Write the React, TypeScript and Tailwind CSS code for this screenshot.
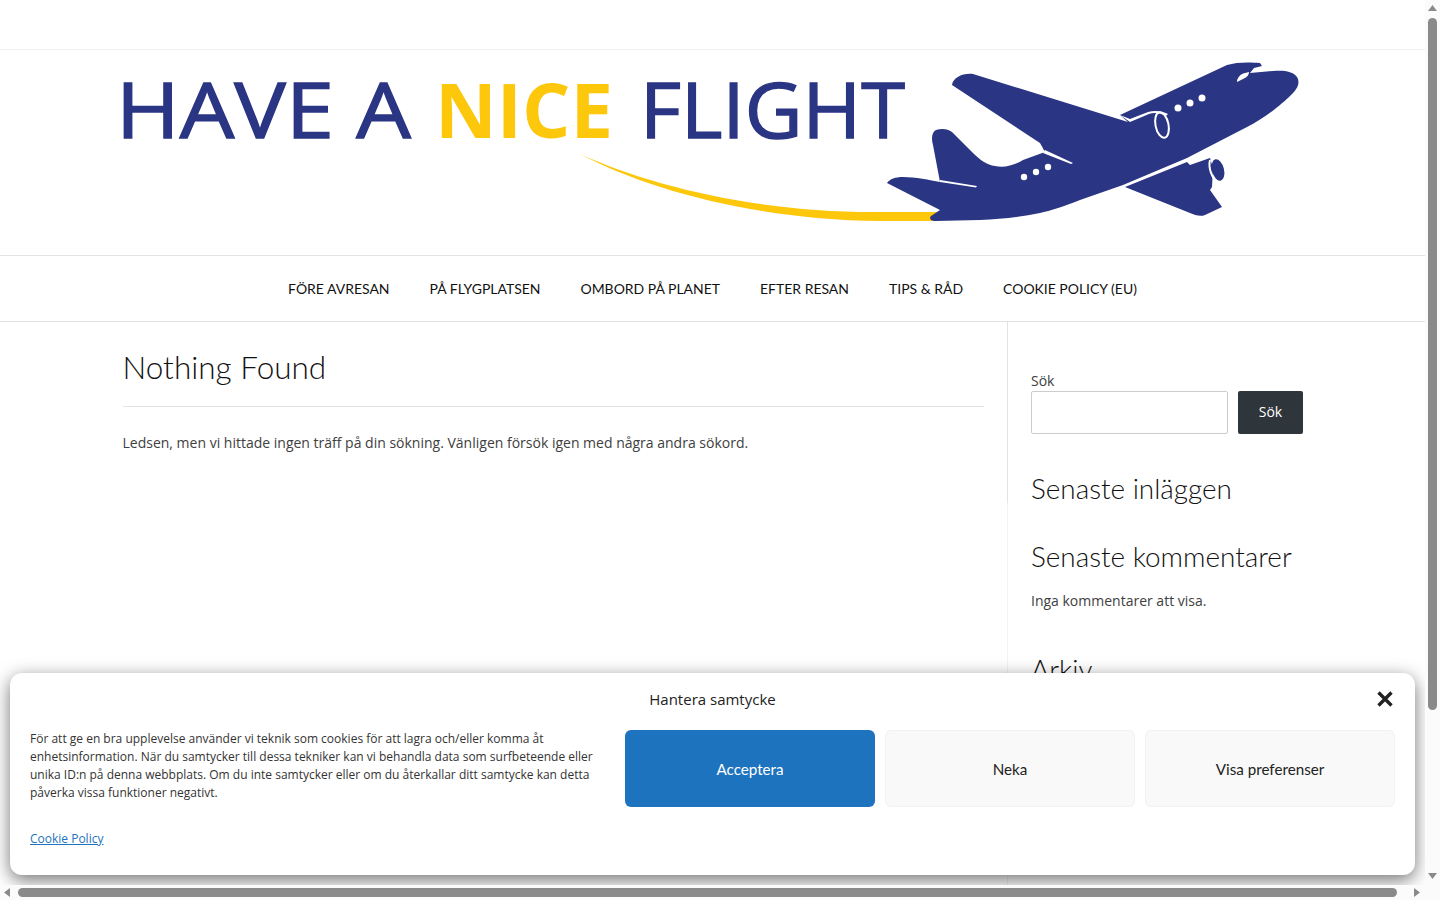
const navItems = ["FÖRE AVRESAN", "PÅ FLYGPLATSEN", "OMBORD PÅ PLANET", "EFTER RESAN", "TIPS & RÅD", "COOKIE POLICY (EU)"];

function Logo() {
  return (
    <svg width="1425" height="205" viewBox="0 50 1425 205" className="block">
      <text x="116" y="137.5" textLength="295" lengthAdjust="spacingAndGlyphs" fontFamily="'Open Sans', sans-serif" fontSize="76" fill="#2a3583" stroke="#2a3583" strokeWidth="1.4">HAVE A</text>
      <text x="435" y="137.5" textLength="178" lengthAdjust="spacingAndGlyphs" fontFamily="'Open Sans', sans-serif" fontWeight="700" fontSize="76" fill="#fdc70c">NICE</text>
      <text x="640" y="137.5" textLength="265" lengthAdjust="spacingAndGlyphs" fontFamily="'Open Sans', sans-serif" fontSize="76" fill="#2a3583" stroke="#2a3583" strokeWidth="1.4">FLIGHT</text>
      <path d="M580 154 C650 186 760 213 880 212 L940 212 L938 221 L880 221 C760 220 650 191 580 154 Z" fill="#fdc70c" />
      <g fill="#2a3583">
        <path d="M952 85 C953 78 962 73 973 74 L1128 122 L1120 115 L1227 65 C1236 62 1250 62 1260 63 L1262 66 L1254 68 L1250 73 L1273 71 C1283 70 1293 71 1297 77 C1301 84 1296 90 1291 95 C1282 104 1265 118 1247 127 L1187 158 L1123 185 L1080 200 C1065 206 1050 211 1040 213 C1020 217 1000 219 980 220 L935 221 C930 221 929 218 931 216 L940 210 L887 183 C890 179 895 177 903 177 C915 177 930 180 940 182 L933 145 C931 138 932 132 936 130 C942 128 948 129 952 132 L973 153 C980 160 987 165 995 166 C1005 168 1015 165 1023 160 L1045 152 L1040 143 Z" />
        <path d="M1125 187 L1187 162 L1190 165 L1210 158 L1213 168 L1212 187 L1210 190 L1222 207 L1205 215 C1200 217 1195 215 1190 213 Z" />
        <ellipse cx="1218" cy="170" rx="6" ry="11" transform="rotate(-14 1218 170)" />
      </g>
      <g fill="#fff">
        <path d="M1120 115 L1130 119 L1148 112 C1155 110 1162 111 1168 114 L1166 116 C1160 113 1154 112 1149 114 L1130 122 Z" />
        <path d="M1045 150 L1073 163 L1071 164 L1043 153 Z" />
        <path d="M940 180 L977 186 L976 187.5 L940 182 Z" />
        <circle cx="1178" cy="108" r="3.5" />
        <circle cx="1190" cy="103" r="3.5" />
        <circle cx="1202" cy="98" r="3.5" />
        <circle cx="1024" cy="177" r="3.2" />
        <circle cx="1036" cy="172" r="3.2" />
        <circle cx="1048" cy="167" r="3.2" />
        <path d="M1237 82 C1237 78 1240 74 1245 73 L1249 72 C1249 75 1247 77 1245 78 Z" />
      </g>
      <g fill="none" stroke="#fff" strokeWidth="2">
        <ellipse cx="1162" cy="125" rx="6.5" ry="13" transform="rotate(-12 1162 125)" />
        <path d="M1210 160 C1208 168 1212 178 1217 182" />
      </g>
    </svg>
  );
}

function Banner() {
  return (
    <div className="absolute left-[10px] top-[673px] h-[202px] w-[1405px] rounded-xl bg-white shadow-[0_5px_18px_rgba(0,0,0,0.55)]">
      <div className="flex h-[53px] items-center justify-center pb-[1px] text-[15px] text-[#222]">Hantera samtycke</div>
      <svg viewBox="0 0 16 16" className="absolute left-[1367px] top-[18px] h-4 w-4" fill="none" stroke="#222" strokeWidth="3.4">
        <path d="M1.5 1.5 L14.5 14.5 M14.5 1.5 L1.5 14.5" />
      </svg>
      <div className="flex gap-[10px] pl-5 pr-5 pt-[4px]">
        <div className="w-[585px] shrink-0">
          <p className="text-[12px] leading-[18px] text-[#333]">
            För att ge en bra upplevelse använder vi teknik som cookies för att lagra och/eller komma åt enhetsinformation. När du samtycker till dessa tekniker kan vi behandla data som surfbeteende eller unika ID:n på denna webbplats. Om du inte samtycker eller om du återkallar ditt samtycke kan detta påverka vissa funktioner negativt.
          </p>
          <a className="mt-[28px] block text-[12px] leading-[18px] text-[#1e73be] underline">Cookie Policy</a>
        </div>
        <button className="h-[77px] w-[250px] shrink-0 rounded-md bg-[#1e73be] pt-[1px] font-['Lato'] text-[15.2px] text-white">Acceptera</button>
        <button className="h-[77px] w-[250px] shrink-0 rounded-md border border-[#f2f2f2] bg-[#f9f9f9] pt-px font-['Lato'] text-[15.2px] text-[#222]">Neka</button>
        <button className="h-[77px] w-[250px] shrink-0 rounded-md border border-[#f2f2f2] bg-[#f9f9f9] pt-px font-['Lato'] text-[15.2px] text-[#222]">Visa preferenser</button>
      </div>
    </div>
  );
}

function ScrollArrow({ points, className }: { points: string; className: string }) {
  return (
    <svg viewBox="0 0 15 15" className={className} fill="#8a8a8a">
      <polygon points={points} />
    </svg>
  );
}

export default function App() {
  return (
    <div className="flex h-[900px] w-[1440px] flex-col overflow-hidden bg-white font-['Open_Sans'] text-[14px] text-[#404040]">
      <div className="flex h-[885px] shrink-0">
        <div className="relative h-[885px] w-[1425px] shrink-0 overflow-hidden">
          <div className="h-[50px] border-b border-[#efefef]" />
          <div className="h-[205px]">
            <Logo />
          </div>
          <nav className="flex h-[67px] items-center justify-center gap-[40px] border-y border-[#e3e3e3] pt-[2px] font-['Lato'] text-[13.97px] text-[#111]">
            {navItems.map((t) => (
              <span key={t}>{t}</span>
            ))}
          </nav>
          <div className="flex h-[563px]">
            <main className="relative w-[1008px] shrink-0 border-r border-[#f3f3f3] pl-[122.5px] pr-[23px] pt-[25px]">
              <div className="absolute right-[-1px] top-0 h-[181px] w-px bg-[#e3e3e3]" />
              <h1 className="border-b border-[#e3e3e3] pb-[18px] font-['Lato'] text-[31.5px] font-light leading-[41px] text-[#111]">Nothing Found</h1>
              <p className="mt-[26px] leading-[20px]">Ledsen, men vi hittade ingen träff på din sökning. Vänligen försök igen med några andra sökord.</p>
            </main>
            <aside className="w-[296px] pl-[23px] pt-[49px]">
              <label className="mb-px block leading-[19px]">Sök</label>
              <div className="flex gap-[10px]">
                <div className="h-[43px] w-[197px] rounded-[2px] border border-[#ccc] bg-white" />
                <button className="h-[43px] w-[65px] rounded-[2px] bg-[#2f363b] pb-[2px] text-[14px] text-white">Sök</button>
              </div>
              <h2 className="mt-[35px] font-['Lato'] text-[27.9px] font-light leading-[38px] text-[#111]">Senaste inläggen</h2>
              <h2 className="mt-[30px] font-['Lato'] text-[27.9px] font-light leading-[38px] text-[#111]">Senaste kommentarer</h2>
              <p className="mt-[16px] leading-[20px]">Inga kommentarer att visa.</p>
              <h2 className="mt-[39px] font-['Lato'] text-[27.9px] font-light leading-[38px] text-[#111]">Arkiv</h2>
            </aside>
          </div>
          <Banner />
        </div>
        <div className="flex w-[15px] shrink-0 flex-col items-center bg-[#fbfbfb]">
          <ScrollArrow points="7.5,5 12,11 3,11" className="h-[15px] w-[15px] shrink-0" />
          <div className="mt-[3px] h-[692px] w-[9px] rounded-full bg-[#8a8a8a]" />
          <div className="flex-1" />
          <ScrollArrow points="3,3 12,3 7.5,9" className="h-[15px] w-[15px] shrink-0" />
        </div>
      </div>
      <div className="flex h-[15px] shrink-0 items-center bg-[#fbfbfb]">
        <ScrollArrow points="10,3 10,12 4,7.5" className="h-[15px] w-[15px] shrink-0" />
        <div className="ml-[3px] h-[9px] w-[1379px] rounded-full bg-[#8a8a8a]" />
        <div className="flex-1" />
        <ScrollArrow points="4,3 10,7.5 4,12" className="mr-[15px] h-[15px] w-[15px] shrink-0" />
      </div>
    </div>
  );
}
